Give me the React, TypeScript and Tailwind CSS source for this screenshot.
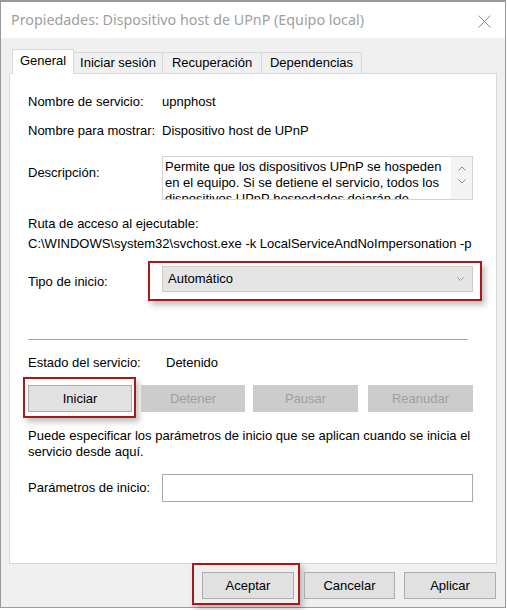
import React from "react";

const body = { fontFamily: '"Liberation Sans", Arial, sans-serif' };

function Btn({ label, w, disabled }: { label: string; w: string; disabled?: boolean }) {
  return (
    <div
      className={
        "h-[27px] flex items-center justify-center text-[13px] border " +
        w +
        " " +
        (disabled ? "bg-[#cccccc] border-[#cccccc] text-[#a0a0a0]" : "bg-[#e1e1e1] border-[#adadad] text-black")
      }
    >
      {label}
    </div>
  );
}

export default function App() {
  return (
    <div className="w-[507px] h-[610px] bg-white overflow-hidden" style={body}>
      <div className="w-[506px] h-[608px] flex flex-col border-t-2 border-l border-r border-b border-[#9a9a9a] bg-[#f0f0f0]">
        {/* title bar */}
        <div className="h-[36px] bg-white flex items-center justify-between pl-[10px] pr-[14px] shrink-0">
          <span
            className="text-[14.3px] text-[#a0a0a0]"
            style={{ fontFamily: '"Noto Sans", "Open Sans", sans-serif' }}
          >
            Propiedades: Dispositivo host de UPnP (Equipo local)
          </span>
          <svg width="13" height="13" viewBox="0 0 13 13" className="mt-[2px]">
            <path d="M0.5 0.5 L12.5 12.5 M12.5 0.5 L0.5 12.5" stroke="#8a8a8a" strokeWidth="1" fill="none" />
          </svg>
        </div>

        {/* body */}
        <div className="flex flex-col pl-[8px] pr-[8px] pt-[11px]">
          {/* tabs */}
          <div className="flex items-end h-[25px] pl-[3px] relative z-10">
            <div className="h-[25px] w-[62px] bg-white border-t border-l border-r border-[#d9d9d9] flex items-center justify-center text-[13px] pb-[2px]">
              General
            </div>
            <div className="h-[22px] w-[89px] bg-[#f0f0f0] border-t border-r border-b border-[#d9d9d9] flex items-center justify-center text-[13px]">
              Iniciar sesión
            </div>
            <div className="h-[22px] w-[99px] bg-[#f0f0f0] border-t border-r border-b border-[#d9d9d9] flex items-center justify-center text-[13px]">
              Recuperación
            </div>
            <div className="h-[22px] w-[100px] bg-[#f0f0f0] border-t border-r border-b border-[#d9d9d9] flex items-center justify-center text-[13px]">
              Dependencias
            </div>
          </div>

          {/* panel */}
          <div className="-mt-px h-[491px] bg-white border border-[#d9d9d9] flex flex-col pl-[18px] text-[13px] text-black">
            <div className="mt-[18px] h-[20px] flex items-center">
              <span className="w-[134px]">Nombre de servicio:</span>
              <span>upnphost</span>
            </div>
            <div className="mt-[9px] h-[20px] flex items-center">
              <span className="w-[134px]">Nombre para mostrar:</span>
              <span>Dispositivo host de UPnP</span>
            </div>
            <div className="mt-[15px] flex items-start">
              <span className="w-[134px] mt-[7px]">Descripción:</span>
              <div className="w-[311px] h-[44px] border border-[#d4d4d4] flex overflow-hidden">
                <div className="flex-1 pl-[2px] pt-[2px] leading-[16px] overflow-hidden">
                  Permite que los dispositivos UPnP se hospeden en el equipo. Si se detiene el servicio, todos los
                  dispositivos UPnP hospedados dejarán de funcionar y no se podrán agregar dispositivos.
                </div>
                <div className="w-[21px] bg-[#f4f4f4] flex flex-col items-center pt-[9px] gap-[8px]">
                  <svg width="8" height="5" viewBox="0 0 8 5">
                    <path d="M0.5 4.5 L4 1 L7.5 4.5" stroke="#8a8a8a" strokeWidth="1" fill="none" />
                  </svg>
                  <svg width="8" height="5" viewBox="0 0 8 5">
                    <path d="M0.5 0.5 L4 4 L7.5 0.5" stroke="#8a8a8a" strokeWidth="1" fill="none" />
                  </svg>
                </div>
              </div>
            </div>
            <div className="mt-[14px] h-[20px] flex items-center">Ruta de acceso al ejecutable:</div>
            <div className="h-[20px] w-[445px] flex items-center overflow-hidden whitespace-nowrap">
              C:\WINDOWS\system32\svchost.exe -k LocalServiceAndNoImpersonation -p
            </div>
            <div className="mt-[7px] flex items-center">
              <span className="w-[120px] mt-[1px]">Tipo de inicio:</span>
              <div className="w-[334px] h-[40px] border-2 border-[#a31a1f] pl-[12px] pr-[7px] pt-[3px] shadow-[3px_4px_6px_rgba(0,0,0,0.25)]">
                <div className="h-[26px] bg-[#e5e5e5] border border-[#cccccc] flex items-center justify-between pl-[5px] pr-[8px]">
                  <span>Automático</span>
                  <svg width="7" height="4" viewBox="0 0 7 4">
                    <path d="M0.5 0.5 L3.5 3.5 L6.5 0.5" stroke="#9a9a9a" strokeWidth="1" fill="none" />
                  </svg>
                </div>
              </div>
            </div>
            <div className="mt-[38px] w-[440px] h-px bg-[#a0a0a0]" />
            <div className="mt-[13px] h-[20px] flex items-center">
              <span className="w-[138px]">Estado del servicio:</span>
              <span>Detenido</span>
            </div>
            <div className="mt-[4px] flex items-start -ml-[5px]">
              <div className="w-[113px] h-[41px] border-2 border-[#a31a1f] pl-[3px] pt-[6px] shadow-[3px_4px_6px_rgba(0,0,0,0.25)]">
                <Btn label="Iniciar" w="w-[104px]" />
              </div>
              <div className="mt-[8px] ml-[5px]">
                <Btn label="Detener" w="w-[104px]" disabled />
              </div>
              <div className="mt-[8px] ml-[8px]">
                <Btn label="Pausar" w="w-[105px]" disabled />
              </div>
              <div className="mt-[8px] ml-[10px]">
                <Btn label="Reanudar" w="w-[105px]" disabled />
              </div>
            </div>
            <div className="mt-[10px] leading-[16px] w-[450px]">
              Puede especificar los parámetros de inicio que se aplican cuando se inicia el servicio desde aquí.
            </div>
            <div className="mt-[14px] flex items-center">
              <span className="w-[134px]">Parámetros de inicio:</span>
              <div className="w-[311px] h-[28px] border border-[#a9a9a9] bg-white" />
            </div>
          </div>

          {/* bottom buttons */}
          <div className="flex justify-end items-start pr-[1px] -mt-[1px] text-[13px]">
            <div className="w-[108px] h-[42px] border-2 border-[#a31a1f] pl-[8px] pt-[7px] shadow-[3px_4px_6px_rgba(0,0,0,0.25)]">
              <Btn label="Aceptar" w="w-[92px]" />
            </div>
            <div className="mt-[9px] ml-[4px]">
              <Btn label="Cancelar" w="w-[91px]" />
            </div>
            <div className="mt-[9px] ml-[9px]">
              <Btn label="Aplicar" w="w-[92px]" />
            </div>
          </div>
        </div>
      </div>
    </div>
  );
}
